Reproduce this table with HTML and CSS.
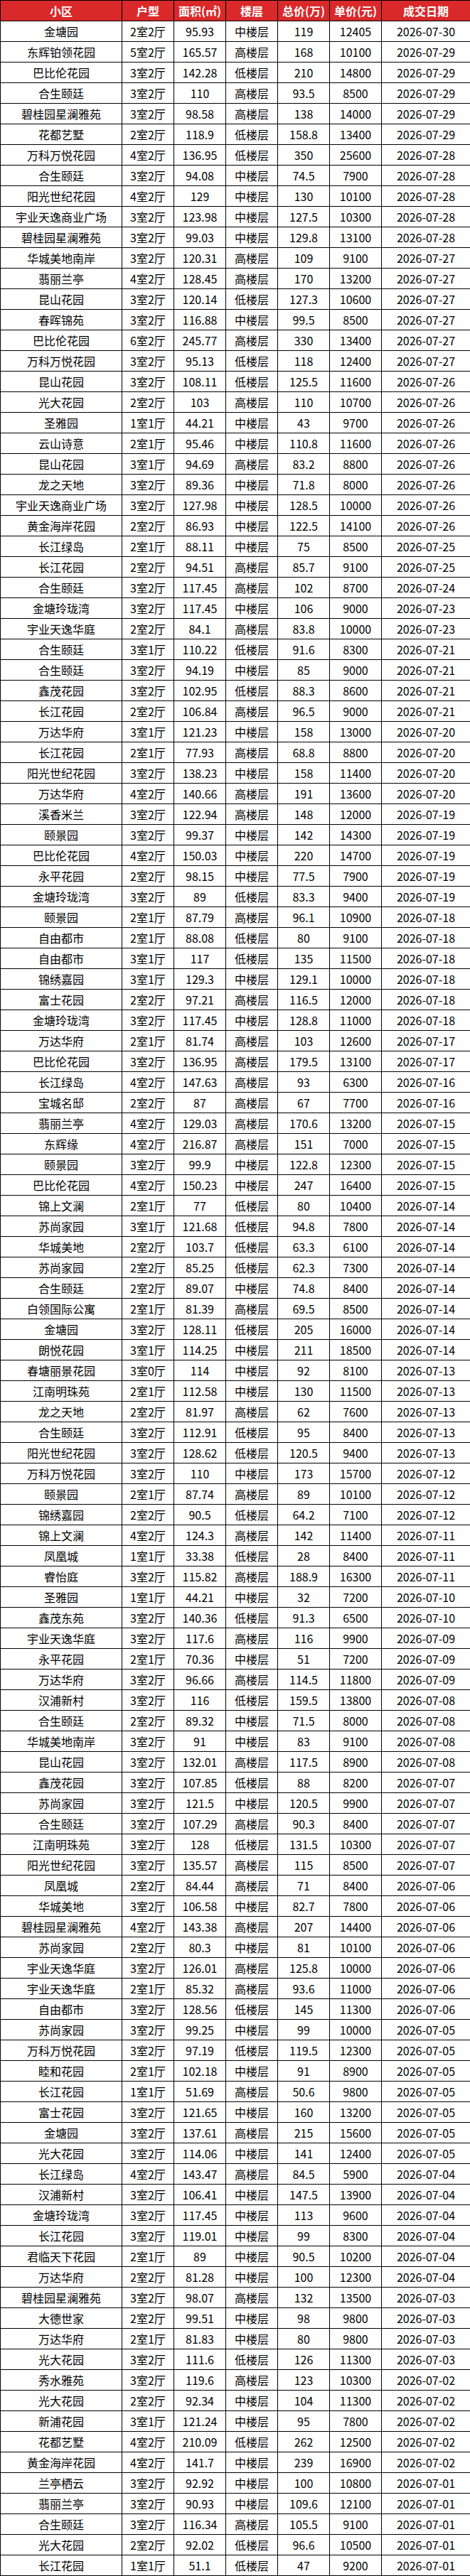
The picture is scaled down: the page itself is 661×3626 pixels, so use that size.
FILE: index.html
```html
<!DOCTYPE html>
<html lang="zh-CN">
<head>
<meta charset="utf-8">
<title>成交记录</title>
<link rel="stylesheet" href="styles.css">
</head>
<body>
<table class="deals">
<colgroup>
<col class="c-name"><col class="c-mid"><col class="c-mid"><col class="c-mid"><col class="c-mid"><col class="c-mid"><col class="c-date">
</colgroup>
<thead>
<tr><th>小区</th><th>户型</th><th>面积(㎡)</th><th>楼层</th><th>总价(万)</th><th>单价(元)</th><th>成交日期</th></tr>
</thead>
<tbody>
<tr><td>金塘园</td><td>2室2厅</td><td>95.93</td><td>中楼层</td><td>119</td><td>12405</td><td>2026-07-30</td></tr>
<tr><td>东辉铂领花园</td><td>5室2厅</td><td>165.57</td><td>高楼层</td><td>168</td><td>10100</td><td>2026-07-29</td></tr>
<tr><td>巴比伦花园</td><td>3室2厅</td><td>142.28</td><td>低楼层</td><td>210</td><td>14800</td><td>2026-07-29</td></tr>
<tr><td>合生颐廷</td><td>3室2厅</td><td>110</td><td>高楼层</td><td>93.5</td><td>8500</td><td>2026-07-29</td></tr>
<tr><td>碧桂园星澜雅苑</td><td>3室2厅</td><td>98.58</td><td>高楼层</td><td>138</td><td>14000</td><td>2026-07-29</td></tr>
<tr><td>花都艺墅</td><td>2室2厅</td><td>118.9</td><td>低楼层</td><td>158.8</td><td>13400</td><td>2026-07-29</td></tr>
<tr><td>万科万悦花园</td><td>4室2厅</td><td>136.95</td><td>低楼层</td><td>350</td><td>25600</td><td>2026-07-28</td></tr>
<tr><td>合生颐廷</td><td>3室2厅</td><td>94.08</td><td>中楼层</td><td>74.5</td><td>7900</td><td>2026-07-28</td></tr>
<tr><td>阳光世纪花园</td><td>4室2厅</td><td>129</td><td>中楼层</td><td>130</td><td>10100</td><td>2026-07-28</td></tr>
<tr><td>宇业天逸商业广场</td><td>3室2厅</td><td>123.98</td><td>中楼层</td><td>127.5</td><td>10300</td><td>2026-07-28</td></tr>
<tr><td>碧桂园星澜雅苑</td><td>3室2厅</td><td>99.03</td><td>中楼层</td><td>129.8</td><td>13100</td><td>2026-07-28</td></tr>
<tr><td>华城美地南岸</td><td>3室2厅</td><td>120.31</td><td>高楼层</td><td>109</td><td>9100</td><td>2026-07-27</td></tr>
<tr><td>翡丽兰亭</td><td>4室2厅</td><td>128.45</td><td>高楼层</td><td>170</td><td>13200</td><td>2026-07-27</td></tr>
<tr><td>昆山花园</td><td>3室2厅</td><td>120.14</td><td>低楼层</td><td>127.3</td><td>10600</td><td>2026-07-27</td></tr>
<tr><td>春晖锦苑</td><td>3室2厅</td><td>116.88</td><td>中楼层</td><td>99.5</td><td>8500</td><td>2026-07-27</td></tr>
<tr><td>巴比伦花园</td><td>6室2厅</td><td>245.77</td><td>高楼层</td><td>330</td><td>13400</td><td>2026-07-27</td></tr>
<tr><td>万科万悦花园</td><td>3室2厅</td><td>95.13</td><td>低楼层</td><td>118</td><td>12400</td><td>2026-07-27</td></tr>
<tr><td>昆山花园</td><td>3室2厅</td><td>108.11</td><td>低楼层</td><td>125.5</td><td>11600</td><td>2026-07-26</td></tr>
<tr><td>光大花园</td><td>2室2厅</td><td>103</td><td>高楼层</td><td>110</td><td>10700</td><td>2026-07-26</td></tr>
<tr><td>圣雅园</td><td>1室1厅</td><td>44.21</td><td>中楼层</td><td>43</td><td>9700</td><td>2026-07-26</td></tr>
<tr><td>云山诗意</td><td>2室1厅</td><td>95.46</td><td>中楼层</td><td>110.8</td><td>11600</td><td>2026-07-26</td></tr>
<tr><td>昆山花园</td><td>3室1厅</td><td>94.69</td><td>高楼层</td><td>83.2</td><td>8800</td><td>2026-07-26</td></tr>
<tr><td>龙之天地</td><td>3室2厅</td><td>89.36</td><td>中楼层</td><td>71.8</td><td>8000</td><td>2026-07-26</td></tr>
<tr><td>宇业天逸商业广场</td><td>3室2厅</td><td>127.98</td><td>中楼层</td><td>128.5</td><td>10000</td><td>2026-07-26</td></tr>
<tr><td>黄金海岸花园</td><td>2室2厅</td><td>86.93</td><td>中楼层</td><td>122.5</td><td>14100</td><td>2026-07-26</td></tr>
<tr><td>长江绿岛</td><td>2室1厅</td><td>88.11</td><td>中楼层</td><td>75</td><td>8500</td><td>2026-07-25</td></tr>
<tr><td>长江花园</td><td>2室2厅</td><td>94.51</td><td>高楼层</td><td>85.7</td><td>9100</td><td>2026-07-25</td></tr>
<tr><td>合生颐廷</td><td>3室2厅</td><td>117.45</td><td>高楼层</td><td>102</td><td>8700</td><td>2026-07-24</td></tr>
<tr><td>金塘玲珑湾</td><td>3室2厅</td><td>117.45</td><td>中楼层</td><td>106</td><td>9000</td><td>2026-07-23</td></tr>
<tr><td>宇业天逸华庭</td><td>2室2厅</td><td>84.1</td><td>高楼层</td><td>83.8</td><td>10000</td><td>2026-07-23</td></tr>
<tr><td>合生颐廷</td><td>3室1厅</td><td>110.22</td><td>低楼层</td><td>91.6</td><td>8300</td><td>2026-07-21</td></tr>
<tr><td>合生颐廷</td><td>3室2厅</td><td>94.19</td><td>中楼层</td><td>85</td><td>9000</td><td>2026-07-21</td></tr>
<tr><td>鑫茂花园</td><td>3室2厅</td><td>102.95</td><td>低楼层</td><td>88.3</td><td>8600</td><td>2026-07-21</td></tr>
<tr><td>长江花园</td><td>2室2厅</td><td>106.84</td><td>高楼层</td><td>96.5</td><td>9000</td><td>2026-07-21</td></tr>
<tr><td>万达华府</td><td>3室1厅</td><td>121.23</td><td>中楼层</td><td>158</td><td>13000</td><td>2026-07-20</td></tr>
<tr><td>长江花园</td><td>2室1厅</td><td>77.93</td><td>高楼层</td><td>68.8</td><td>8800</td><td>2026-07-20</td></tr>
<tr><td>阳光世纪花园</td><td>3室2厅</td><td>138.23</td><td>中楼层</td><td>158</td><td>11400</td><td>2026-07-20</td></tr>
<tr><td>万达华府</td><td>4室2厅</td><td>140.66</td><td>高楼层</td><td>191</td><td>13600</td><td>2026-07-20</td></tr>
<tr><td>溪香米兰</td><td>3室2厅</td><td>122.94</td><td>高楼层</td><td>148</td><td>12000</td><td>2026-07-19</td></tr>
<tr><td>颐景园</td><td>3室2厅</td><td>99.37</td><td>中楼层</td><td>142</td><td>14300</td><td>2026-07-19</td></tr>
<tr><td>巴比伦花园</td><td>4室2厅</td><td>150.03</td><td>中楼层</td><td>220</td><td>14700</td><td>2026-07-19</td></tr>
<tr><td>永平花园</td><td>2室2厅</td><td>98.15</td><td>中楼层</td><td>77.5</td><td>7900</td><td>2026-07-19</td></tr>
<tr><td>金塘玲珑湾</td><td>3室2厅</td><td>89</td><td>低楼层</td><td>83.3</td><td>9400</td><td>2026-07-19</td></tr>
<tr><td>颐景园</td><td>2室1厅</td><td>87.79</td><td>高楼层</td><td>96.1</td><td>10900</td><td>2026-07-18</td></tr>
<tr><td>自由都市</td><td>2室1厅</td><td>88.08</td><td>低楼层</td><td>80</td><td>9100</td><td>2026-07-18</td></tr>
<tr><td>自由都市</td><td>3室1厅</td><td>117</td><td>低楼层</td><td>135</td><td>11500</td><td>2026-07-18</td></tr>
<tr><td>锦绣嘉园</td><td>3室1厅</td><td>129.3</td><td>中楼层</td><td>129.1</td><td>10000</td><td>2026-07-18</td></tr>
<tr><td>富士花园</td><td>2室2厅</td><td>97.21</td><td>高楼层</td><td>116.5</td><td>12000</td><td>2026-07-18</td></tr>
<tr><td>金塘玲珑湾</td><td>3室2厅</td><td>117.45</td><td>中楼层</td><td>128.8</td><td>11000</td><td>2026-07-18</td></tr>
<tr><td>万达华府</td><td>2室1厅</td><td>81.74</td><td>高楼层</td><td>103</td><td>12600</td><td>2026-07-17</td></tr>
<tr><td>巴比伦花园</td><td>3室2厅</td><td>136.95</td><td>高楼层</td><td>179.5</td><td>13100</td><td>2026-07-17</td></tr>
<tr><td>长江绿岛</td><td>4室2厅</td><td>147.63</td><td>高楼层</td><td>93</td><td>6300</td><td>2026-07-16</td></tr>
<tr><td>宝城名邸</td><td>2室2厅</td><td>87</td><td>高楼层</td><td>67</td><td>7700</td><td>2026-07-16</td></tr>
<tr><td>翡丽兰亭</td><td>4室2厅</td><td>129.03</td><td>高楼层</td><td>170.6</td><td>13200</td><td>2026-07-15</td></tr>
<tr><td>东辉缘</td><td>4室2厅</td><td>216.87</td><td>高楼层</td><td>151</td><td>7000</td><td>2026-07-15</td></tr>
<tr><td>颐景园</td><td>3室2厅</td><td>99.9</td><td>中楼层</td><td>122.8</td><td>12300</td><td>2026-07-15</td></tr>
<tr><td>巴比伦花园</td><td>4室2厅</td><td>150.23</td><td>中楼层</td><td>247</td><td>16400</td><td>2026-07-15</td></tr>
<tr><td>锦上文澜</td><td>2室1厅</td><td>77</td><td>低楼层</td><td>80</td><td>10400</td><td>2026-07-14</td></tr>
<tr><td>苏尚家园</td><td>3室1厅</td><td>121.68</td><td>低楼层</td><td>94.8</td><td>7800</td><td>2026-07-14</td></tr>
<tr><td>华城美地</td><td>2室2厅</td><td>103.7</td><td>低楼层</td><td>63.3</td><td>6100</td><td>2026-07-14</td></tr>
<tr><td>苏尚家园</td><td>2室2厅</td><td>85.25</td><td>低楼层</td><td>62.3</td><td>7300</td><td>2026-07-14</td></tr>
<tr><td>合生颐廷</td><td>2室2厅</td><td>89.07</td><td>中楼层</td><td>74.8</td><td>8400</td><td>2026-07-14</td></tr>
<tr><td>白领国际公寓</td><td>2室1厅</td><td>81.39</td><td>高楼层</td><td>69.5</td><td>8500</td><td>2026-07-14</td></tr>
<tr><td>金塘园</td><td>3室2厅</td><td>128.11</td><td>低楼层</td><td>205</td><td>16000</td><td>2026-07-14</td></tr>
<tr><td>朗悦花园</td><td>3室1厅</td><td>114.25</td><td>中楼层</td><td>211</td><td>18500</td><td>2026-07-14</td></tr>
<tr><td>春塘丽景花园</td><td>3室0厅</td><td>114</td><td>中楼层</td><td>92</td><td>8100</td><td>2026-07-13</td></tr>
<tr><td>江南明珠苑</td><td>2室1厅</td><td>112.58</td><td>中楼层</td><td>130</td><td>11500</td><td>2026-07-13</td></tr>
<tr><td>龙之天地</td><td>2室2厅</td><td>81.97</td><td>高楼层</td><td>62</td><td>7600</td><td>2026-07-13</td></tr>
<tr><td>合生颐廷</td><td>3室2厅</td><td>112.91</td><td>低楼层</td><td>95</td><td>8400</td><td>2026-07-13</td></tr>
<tr><td>阳光世纪花园</td><td>3室2厅</td><td>128.62</td><td>低楼层</td><td>120.5</td><td>9400</td><td>2026-07-13</td></tr>
<tr><td>万科万悦花园</td><td>3室2厅</td><td>110</td><td>中楼层</td><td>173</td><td>15700</td><td>2026-07-12</td></tr>
<tr><td>颐景园</td><td>2室1厅</td><td>87.74</td><td>高楼层</td><td>89</td><td>10100</td><td>2026-07-12</td></tr>
<tr><td>锦绣嘉园</td><td>2室2厅</td><td>90.5</td><td>低楼层</td><td>64.2</td><td>7100</td><td>2026-07-12</td></tr>
<tr><td>锦上文澜</td><td>4室2厅</td><td>124.3</td><td>高楼层</td><td>142</td><td>11400</td><td>2026-07-11</td></tr>
<tr><td>凤凰城</td><td>1室1厅</td><td>33.38</td><td>低楼层</td><td>28</td><td>8400</td><td>2026-07-11</td></tr>
<tr><td>睿怡庭</td><td>3室2厅</td><td>115.82</td><td>高楼层</td><td>188.9</td><td>16300</td><td>2026-07-11</td></tr>
<tr><td>圣雅园</td><td>1室1厅</td><td>44.21</td><td>中楼层</td><td>32</td><td>7200</td><td>2026-07-10</td></tr>
<tr><td>鑫茂东苑</td><td>3室2厅</td><td>140.36</td><td>低楼层</td><td>91.3</td><td>6500</td><td>2026-07-10</td></tr>
<tr><td>宇业天逸华庭</td><td>3室2厅</td><td>117.6</td><td>高楼层</td><td>116</td><td>9900</td><td>2026-07-09</td></tr>
<tr><td>永平花园</td><td>2室1厅</td><td>70.36</td><td>中楼层</td><td>51</td><td>7200</td><td>2026-07-09</td></tr>
<tr><td>万达华府</td><td>3室2厅</td><td>96.66</td><td>高楼层</td><td>114.5</td><td>11800</td><td>2026-07-09</td></tr>
<tr><td>汉浦新村</td><td>3室2厅</td><td>116</td><td>低楼层</td><td>159.5</td><td>13800</td><td>2026-07-08</td></tr>
<tr><td>合生颐廷</td><td>2室2厅</td><td>89.32</td><td>中楼层</td><td>71.5</td><td>8000</td><td>2026-07-08</td></tr>
<tr><td>华城美地南岸</td><td>3室2厅</td><td>91</td><td>中楼层</td><td>83</td><td>9100</td><td>2026-07-08</td></tr>
<tr><td>昆山花园</td><td>3室2厅</td><td>132.01</td><td>高楼层</td><td>117.5</td><td>8900</td><td>2026-07-08</td></tr>
<tr><td>鑫茂花园</td><td>3室2厅</td><td>107.85</td><td>低楼层</td><td>88</td><td>8200</td><td>2026-07-07</td></tr>
<tr><td>苏尚家园</td><td>3室2厅</td><td>121.5</td><td>中楼层</td><td>120.5</td><td>9900</td><td>2026-07-07</td></tr>
<tr><td>合生颐廷</td><td>3室2厅</td><td>107.29</td><td>高楼层</td><td>90.3</td><td>8400</td><td>2026-07-07</td></tr>
<tr><td>江南明珠苑</td><td>3室2厅</td><td>128</td><td>低楼层</td><td>131.5</td><td>10300</td><td>2026-07-07</td></tr>
<tr><td>阳光世纪花园</td><td>3室2厅</td><td>135.57</td><td>高楼层</td><td>115</td><td>8500</td><td>2026-07-07</td></tr>
<tr><td>凤凰城</td><td>2室2厅</td><td>84.44</td><td>高楼层</td><td>71</td><td>8400</td><td>2026-07-06</td></tr>
<tr><td>华城美地</td><td>3室2厅</td><td>106.58</td><td>中楼层</td><td>82.7</td><td>7800</td><td>2026-07-06</td></tr>
<tr><td>碧桂园星澜雅苑</td><td>4室2厅</td><td>143.38</td><td>高楼层</td><td>207</td><td>14400</td><td>2026-07-06</td></tr>
<tr><td>苏尚家园</td><td>2室2厅</td><td>80.3</td><td>中楼层</td><td>81</td><td>10100</td><td>2026-07-06</td></tr>
<tr><td>宇业天逸华庭</td><td>3室2厅</td><td>126.01</td><td>高楼层</td><td>125.8</td><td>10000</td><td>2026-07-06</td></tr>
<tr><td>宇业天逸华庭</td><td>2室1厅</td><td>85.32</td><td>高楼层</td><td>93.6</td><td>11000</td><td>2026-07-06</td></tr>
<tr><td>自由都市</td><td>3室2厅</td><td>128.56</td><td>低楼层</td><td>145</td><td>11300</td><td>2026-07-06</td></tr>
<tr><td>苏尚家园</td><td>3室2厅</td><td>99.25</td><td>中楼层</td><td>99</td><td>10000</td><td>2026-07-05</td></tr>
<tr><td>万科万悦花园</td><td>3室2厅</td><td>97.19</td><td>低楼层</td><td>119.5</td><td>12300</td><td>2026-07-05</td></tr>
<tr><td>睦和花园</td><td>2室1厅</td><td>102.18</td><td>中楼层</td><td>91</td><td>8900</td><td>2026-07-05</td></tr>
<tr><td>长江花园</td><td>1室1厅</td><td>51.69</td><td>高楼层</td><td>50.6</td><td>9800</td><td>2026-07-05</td></tr>
<tr><td>富士花园</td><td>3室2厅</td><td>121.65</td><td>中楼层</td><td>160</td><td>13200</td><td>2026-07-05</td></tr>
<tr><td>金塘园</td><td>3室2厅</td><td>137.61</td><td>高楼层</td><td>215</td><td>15600</td><td>2026-07-05</td></tr>
<tr><td>光大花园</td><td>3室2厅</td><td>114.06</td><td>中楼层</td><td>141</td><td>12400</td><td>2026-07-05</td></tr>
<tr><td>长江绿岛</td><td>4室2厅</td><td>143.47</td><td>高楼层</td><td>84.5</td><td>5900</td><td>2026-07-04</td></tr>
<tr><td>汉浦新村</td><td>3室2厅</td><td>106.41</td><td>中楼层</td><td>147.5</td><td>13900</td><td>2026-07-04</td></tr>
<tr><td>金塘玲珑湾</td><td>3室2厅</td><td>117.45</td><td>中楼层</td><td>113</td><td>9600</td><td>2026-07-04</td></tr>
<tr><td>长江花园</td><td>3室2厅</td><td>119.01</td><td>中楼层</td><td>99</td><td>8300</td><td>2026-07-04</td></tr>
<tr><td>君临天下花园</td><td>2室1厅</td><td>89</td><td>中楼层</td><td>90.5</td><td>10200</td><td>2026-07-04</td></tr>
<tr><td>万达华府</td><td>2室2厅</td><td>81.28</td><td>中楼层</td><td>100</td><td>12300</td><td>2026-07-04</td></tr>
<tr><td>碧桂园星澜雅苑</td><td>3室2厅</td><td>98.07</td><td>高楼层</td><td>132</td><td>13500</td><td>2026-07-03</td></tr>
<tr><td>大德世家</td><td>2室2厅</td><td>99.51</td><td>中楼层</td><td>98</td><td>9800</td><td>2026-07-03</td></tr>
<tr><td>万达华府</td><td>2室1厅</td><td>81.83</td><td>中楼层</td><td>80</td><td>9800</td><td>2026-07-03</td></tr>
<tr><td>光大花园</td><td>3室2厅</td><td>111.6</td><td>低楼层</td><td>126</td><td>11300</td><td>2026-07-03</td></tr>
<tr><td>秀水雅苑</td><td>3室2厅</td><td>119.6</td><td>高楼层</td><td>123</td><td>10300</td><td>2026-07-02</td></tr>
<tr><td>光大花园</td><td>2室2厅</td><td>92.34</td><td>中楼层</td><td>104</td><td>11300</td><td>2026-07-02</td></tr>
<tr><td>新浦花园</td><td>3室1厅</td><td>121.24</td><td>中楼层</td><td>95</td><td>7800</td><td>2026-07-02</td></tr>
<tr><td>花都艺墅</td><td>4室2厅</td><td>210.09</td><td>低楼层</td><td>262</td><td>12500</td><td>2026-07-02</td></tr>
<tr><td>黄金海岸花园</td><td>4室2厅</td><td>141.7</td><td>中楼层</td><td>239</td><td>16900</td><td>2026-07-02</td></tr>
<tr><td>兰亭栖云</td><td>3室2厅</td><td>92.92</td><td>中楼层</td><td>100</td><td>10800</td><td>2026-07-01</td></tr>
<tr><td>翡丽兰亭</td><td>3室2厅</td><td>90.93</td><td>中楼层</td><td>109.6</td><td>12100</td><td>2026-07-01</td></tr>
<tr><td>合生颐廷</td><td>3室2厅</td><td>116.34</td><td>高楼层</td><td>105.5</td><td>9100</td><td>2026-07-01</td></tr>
<tr><td>光大花园</td><td>2室2厅</td><td>92.02</td><td>低楼层</td><td>96.6</td><td>10500</td><td>2026-07-01</td></tr>
<tr><td>长江花园</td><td>1室1厅</td><td>51.1</td><td>低楼层</td><td>47</td><td>9200</td><td>2026-07-01</td></tr>
</tbody>
</table>
</body>
</html>
```
FILE: styles.css
```css
html, body {
  margin: 0;
  padding: 0;
  background: #ffffff;
}

.deals {
  border-collapse: collapse;
  table-layout: fixed;
  width: 661px;
  font-family: "Noto Sans CJK SC", "Noto Sans", sans-serif;
  font-size: 16px;
  color: #000000;
}

.c-name { width: 171px; }
.c-mid { width: 73px; }
.c-date { width: 125px; }

.deals th,
.deals td {
  border: 1px solid #000000;
  padding: 0;
  height: 28px;
  line-height: 28px;
  text-align: center;
  vertical-align: middle;
  white-space: nowrap;
  overflow: hidden;
}

.deals th {
  background: #d9292a;
  color: #ffffff;
  font-weight: 700;
}
```
